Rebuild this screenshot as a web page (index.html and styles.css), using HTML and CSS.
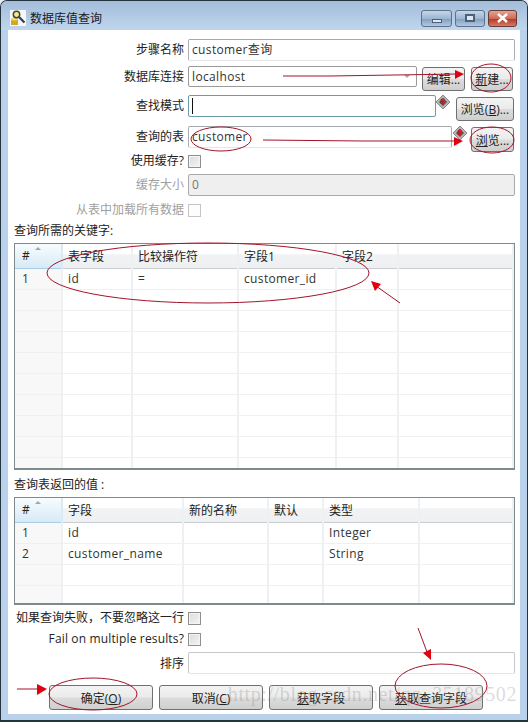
FILE: index.html
```html
<!DOCTYPE html>
<html lang="zh-CN">
<head>
  <meta charset="UTF-8">
  <meta name="viewport" content="width=device-width, initial-scale=1.0">
  <title>数据库值查询</title>
  <link rel="stylesheet" href="styles.css">
</head>
<body>
  <div class="window">
    <!-- Title bar -->
    <div class="titlebar">
      <svg class="app-icon" width="16" height="16" viewBox="0 0 16 16">
        <rect width="16" height="16" fill="#f6f8fa"/>
        <path d="M1 9 h7 v6 h-7 z" fill="#d0a828"/>
        <ellipse cx="4.5" cy="9" rx="3.5" ry="1.5" fill="#f0dc70"/>
        <path d="M9 7 L14.5 12.5" stroke="#3c3c3c" stroke-width="2.2"/>
        <circle cx="6.5" cy="4.5" r="3.2" fill="#f3ea9a" stroke="#3d4a3a" stroke-width="1.5"/>
      </svg>
      <span class="title">数据库值查询</span>
      <div class="win-buttons">
        <div class="win-btn win-min"><span class="min-mark"></span></div>
        <div class="win-btn"><span class="max-mark"></span></div>
        <div class="win-btn win-close">
          <svg width="13" height="10" viewBox="0 0 13 10"><path d="M2 1 L11 9 M11 1 L2 9" stroke="#fff" stroke-width="2.4"/></svg>
        </div>
      </div>
    </div>

    <div class="panel">
      <!-- Step form -->
      <div class="row">
        <label class="label">步骤名称</label>
        <div class="input">customer查询</div>
      </div>
      <div class="row row-conn">
        <label class="label">数据库连接</label>
        <div class="input combo">localhost<span class="combo-arrow"></span></div>
        <button class="btn btn-edit">编辑...</button>
        <button class="btn btn-new"><u>新</u>建...</button>
      </div>
      <div class="row row-mode">
        <label class="label">查找模式</label>
        <div class="input input-focus"><span class="caret"></span></div>
        <svg class="var-mark mark-mode" width="14" height="14" viewBox="0 0 14 14">
          <polygon points="7,0 14,7 7,14 0,7" fill="#b4b4b4" stroke="#8a8a8a"/>
          <polygon points="7,3 11,7 7,11 3,7" fill="#5a4a4c"/>
          <text x="7" y="10" text-anchor="middle" font-size="9" font-weight="bold" fill="#d8142a">$</text>
        </svg>
        <button class="btn btn-browse-b">浏览(<u>B</u>)...</button>
      </div>
      <div class="row row-table">
        <label class="label">查询的表</label>
        <div class="input">customer</div>
        <svg class="var-mark mark-table" width="14" height="14" viewBox="0 0 14 14">
          <polygon points="7,0 14,7 7,14 0,7" fill="#b4b4b4" stroke="#8a8a8a"/>
          <polygon points="7,3 11,7 7,11 3,7" fill="#5a4a4c"/>
          <text x="7" y="10" text-anchor="middle" font-size="9" font-weight="bold" fill="#d8142a">$</text>
        </svg>
        <button class="btn btn-browse"><u>浏</u>览...</button>
      </div>
      <div class="row row-cache">
        <label class="label label-check">使用缓存?</label>
        <span class="check"></span>
      </div>
      <div class="row row-size">
        <label class="label label-off">缓存大小</label>
        <div class="input input-off">0</div>
      </div>
      <div class="row row-load">
        <label class="label label-check label-off">从表中加载所有数据</label>
        <span class="check check-off"></span>
      </div>

      <div class="section-label section-keys">查询所需的关键字:</div>
      <div class="grid grid-keys">
        <table>
          <colgroup><col class="k0"><col class="k1"><col class="k2"><col class="k3"><col class="k4"><col></colgroup>
          <thead>
            <tr><th class="num">#<span class="sort"></span></th><th>表字段</th><th>比较操作符</th><th>字段1</th><th>字段2</th><th></th></tr>
          </thead>
          <tbody>
            <tr><td class="num">1</td><td>id</td><td>=</td><td>customer_id</td><td></td><td></td></tr>
            <tr><td class="num"></td><td></td><td></td><td></td><td></td><td></td></tr>
            <tr><td class="num"></td><td></td><td></td><td></td><td></td><td></td></tr>
            <tr><td class="num"></td><td></td><td></td><td></td><td></td><td></td></tr>
            <tr><td class="num"></td><td></td><td></td><td></td><td></td><td></td></tr>
            <tr><td class="num"></td><td></td><td></td><td></td><td></td><td></td></tr>
            <tr><td class="num"></td><td></td><td></td><td></td><td></td><td></td></tr>
            <tr><td class="num"></td><td></td><td></td><td></td><td></td><td></td></tr>
            <tr><td class="num"></td><td></td><td></td><td></td><td></td><td></td></tr>
            <tr><td class="num"></td><td></td><td></td><td></td><td></td><td></td></tr>
          </tbody>
        </table>
      </div>

      <div class="section-label section-values">查询表返回的值 :</div>
      <div class="grid grid-values">
        <table>
          <colgroup><col class="k0"><col class="v1"><col class="v2"><col class="v3"><col class="v4"><col></colgroup>
          <thead>
            <tr><th class="num">#<span class="sort"></span></th><th>字段</th><th>新的名称</th><th>默认</th><th>类型</th><th></th></tr>
          </thead>
          <tbody>
            <tr><td class="num">1</td><td>id</td><td></td><td></td><td>Integer</td><td></td></tr>
            <tr><td class="num">2</td><td>customer_name</td><td></td><td></td><td>String</td><td></td></tr>
            <tr><td class="num"></td><td></td><td></td><td></td><td></td><td></td></tr>
            <tr><td class="num"></td><td></td><td></td><td></td><td></td><td></td></tr>
          </tbody>
        </table>
      </div>

      <div class="row row-fail">
        <label class="label label-check">如果查询失败，不要忽略这一行</label>
        <span class="check"></span>
      </div>
      <div class="row row-multi">
        <label class="label label-check label-latin">Fail on multiple results?</label>
        <span class="check"></span>
      </div>
      <div class="row row-order">
        <label class="label label-order">排序</label>
        <div class="input input-soft"></div>
      </div>

      <div class="actions">
        <button class="btn btn-action">确定(<u>O</u>)</button>
        <button class="btn btn-action">取消(<u>C</u>)</button>
        <button class="btn btn-action"><u>获</u>取字段</button>
        <button class="btn btn-action"><u>获</u>取查询字段</button>
      </div>
    </div>

    <!-- Hand drawn marks on top of the dialog -->
    <svg class="marks" width="528" height="722" viewBox="0 0 528 722">
      <g fill="none" stroke="#a3142a" stroke-width="1">
        <ellipse cx="491" cy="78" rx="20" ry="14"/>
        <ellipse cx="221" cy="139" rx="30" ry="12"/>
        <ellipse cx="492" cy="140" rx="22" ry="13"/>
        <ellipse cx="208" cy="273" rx="161" ry="30"/>
        <ellipse cx="93" cy="694" rx="44" ry="16"/>
        <ellipse cx="441" cy="686" rx="46" ry="22"/>
        <path d="M283 76 L330 76 L458 74"/>
        <path d="M263 140 L362 141 L458 141"/>
        <path d="M400 303 L376 286"/>
        <path d="M17 689 L40 689"/>
        <path d="M418 628 L427 652"/>
      </g>
      <g fill="#e0000f">
        <polygon points="464,74 455,70 455,79"/>
        <polygon points="463,141 454,137 454,146"/>
        <polygon points="371,281 381,284 375,291"/>
        <polygon points="47,689 37,684 37,695"/>
        <polygon points="431,660 423,653 431,649"/>
      </g>
    </svg>
    <div class="watermark">http://blog.csdn.net/qq_35189502</div>
  </div>
</body>
</html>
```

FILE: styles.css
```css
* {
  box-sizing: border-box;
}
body {
  margin: 0;
  background: #e8eef2;
  font-family: "Open Sans", "Noto Sans CJK SC", sans-serif;
  font-size: 12px;
  letter-spacing: 0.35px;
  color: #222;
}
.window {
  position: relative;
  width: 528px;
  height: 722px;
  overflow: hidden;
  padding: 0 7px;
  background: #b9d1ea;
  border: 1px solid #24343f;
  border-bottom-width: 2px;
  border-radius: 7px 7px 0 0;
}
.titlebar {
  display: flex;
  align-items: center;
  height: 29px;
  margin: 0 -7px;
  padding: 5px 10px 0 9px;
  background: linear-gradient(180deg, #a3bcd8, #b4cce6 60%, #c0d6ec);
}
.app-icon {
  margin-right: 4px;
}
.title {
  font-size: 12px;
  letter-spacing: 0;
  color: #1a1a1a;
}
.win-buttons {
  display: flex;
  gap: 3px;
  margin-left: auto;
}
.win-btn {
  display: flex;
  align-items: center;
  justify-content: center;
  width: 30px;
  height: 17px;
  background: linear-gradient(180deg, #c5d6e8, #9db6d2 50%, #84a1c2 55%, #b0c8e0);
  border: 1px solid #5c7088;
  border-radius: 3px;
}
.win-min {
  width: 31px;
}
.win-close {
  width: 29px;
  background: linear-gradient(180deg, #e0a594, #cf6a55 50%, #b83a28 55%, #d47a66);
  border-color: #6e3a35;
}
.min-mark {
  width: 10px;
  height: 4px;
  margin-top: 6px;
  background: #dfe8f2;
  border: 1px solid #4c6078;
}
.max-mark {
  width: 10px;
  height: 8px;
  background: #dfe8f2;
  border: 2px solid #4c6078;
}
.panel {
  height: 684px;
  padding: 9px 5px 0 6px;
  background: #fff;
}

/* form rows */
.row {
  display: flex;
  align-items: flex-start;
}
.row-conn { margin-top: 5px; }
.row-mode { margin-top: 4px; }
.row-table { margin-top: 5px; }
.row-cache { margin-top: 3px; }
.row-size { margin-top: 6px; }
.row-load { margin-top: 8px; }
.row-fail { margin-top: 7px; }
.row-multi { margin-top: 8px; }
.row-order { margin-top: 6px; }
.label {
  flex: none;
  width: 170px;
  margin-right: 4px;
  line-height: 21px;
  letter-spacing: 0;
  text-align: right;
  white-space: nowrap;
}
.label-check {
  line-height: 12px;
}
.label-latin {
  letter-spacing: 0.15px;
}
.label-order {
  line-height: 24px;
}
.label-off {
  color: #a0a0a0;
}
.input {
  flex: 1;
  position: relative;
  height: 22px;
  padding-left: 3px;
  line-height: 20px;
  color: #333;
  background: #fff;
  border: 1px solid #abadb3;
  border-top-color: #a5a7ad;
  border-bottom-color: #e3e5e8;
  border-radius: 2px;
}
.input-focus {
  border-color: #6d9aa8;
}
.input-off {
  color: #777;
  background: #efefef;
  border-color: #aaa;
}
.input-soft {
  border-color: #c4c6ca;
  border-bottom-color: #e3e5e8;
}
.combo {
  height: 21px;
  border-color: #9a9a9a;
  flex: none;
  width: 229px;
}
.combo-arrow {
  position: absolute;
  right: 6px;
  top: 8px;
  border: 3px solid transparent;
  border-top: 3px solid #aaa;
}
.caret {
  display: block;
  width: 1px;
  height: 16px;
  margin-top: 2px;
  background: #111;
}
.var-mark {
  flex: none;
}
.mark-mode {
  margin: 0 6px 0 0;
}
.mark-table {
  margin: 0 4px 0 1px;
}
.btn {
  flex: none;
  padding: 0;
  font: inherit;
  letter-spacing: 0;
  color: #222;
  background: linear-gradient(180deg, #f3f3f3, #ebebeb 48%, #dcdcdc 52%, #cfcfcf);
  border: 1px solid #707070;
  border-radius: 3px;
}
.btn-edit {
  width: 43px;
  height: 24px;
  margin: 1px 6px 0 5px;
}
.btn-new {
  width: 42px;
  height: 24px;
  margin-top: 1px;
}
.btn-browse-b {
  width: 58px;
  height: 24px;
  margin: 2px 1px 0 0;
}
.btn-browse {
  width: 43px;
  height: 25px;
  margin: 1px 1px 0 0;
}
.check {
  flex: none;
  width: 13px;
  height: 13px;
  background: linear-gradient(135deg, #dcdcdc, #f4f4f4);
  border: 1px solid #8e8f8f;
  box-shadow: inset 0 0 0 1px #f4f4f4;
}
.check-off {
  background: #fdfdfd;
  border-color: #c4c4c4;
  box-shadow: none;
}

/* tables */
.section-label {
  line-height: 14px;
  letter-spacing: 0;
  color: #222;
}
.section-keys { margin-top: 7px; }
.section-values { margin-top: 8px; }
.grid {
  overflow: hidden;
  margin-top: 5px;
  background: #fff;
  border: 1px solid #7f8a8a;
  border-bottom-width: 2px;
}
.grid-keys { height: 227px; }
.grid-values { height: 108px; }
.grid table {
  width: 100%;
  table-layout: fixed;
  border-collapse: collapse;
}
.k0 { width: 47px; }
.k1 { width: 70px; }
.k2 { width: 106px; }
.k3 { width: 98px; }
.k4 { width: 62px; }
.v1 { width: 121px; }
.v2 { width: 85px; }
.v3 { width: 55px; }
.v4 { width: 96px; }
th {
  height: 24px;
  padding: 0 0 0 5px;
  font-weight: normal;
  letter-spacing: 0;
  text-align: left;
  background: linear-gradient(180deg, #fff 40%, #f1f2f4 45%, #eef0f2);
  border-right: 2px solid #eef1f4;
  border-bottom: 1px solid #c9cdd1;
}
th.num {
  position: relative;
  padding-left: 7px;
  background: linear-gradient(180deg, #f8fcfe, #d6eaf6);
  border-bottom-color: #a8cde4;
  border-right-color: #dce9f1;
}
.sort {
  position: absolute;
  left: 20px;
  top: 3px;
  border: 3px solid transparent;
  border-top: 0;
  border-bottom: 3px solid #9aa8b4;
}
td {
  height: 21px;
  padding: 0 0 0 5px;
  color: #333;
  border-right: 2px solid #eef1f4;
  border-bottom: 1px solid #eef0f2;
}
td.num {
  padding-left: 7px;
  background: #f8f8f8;
}

/* bottom buttons */
.actions {
  display: flex;
  gap: 6px;
  margin-top: 9px;
  margin-left: 35px;
}
.btn-action {
  width: 104px;
  height: 25px;
}

/* overlays */
.marks {
  position: absolute;
  left: -1px;
  top: -1px;
  pointer-events: none;
}
.watermark {
  position: absolute;
  right: 10px;
  top: 682px;
  font-family: "Liberation Serif", serif;
  font-size: 20px;
  letter-spacing: 0.6px;
  color: rgba(140, 140, 140, 0.32);
  white-space: nowrap;
}
```
